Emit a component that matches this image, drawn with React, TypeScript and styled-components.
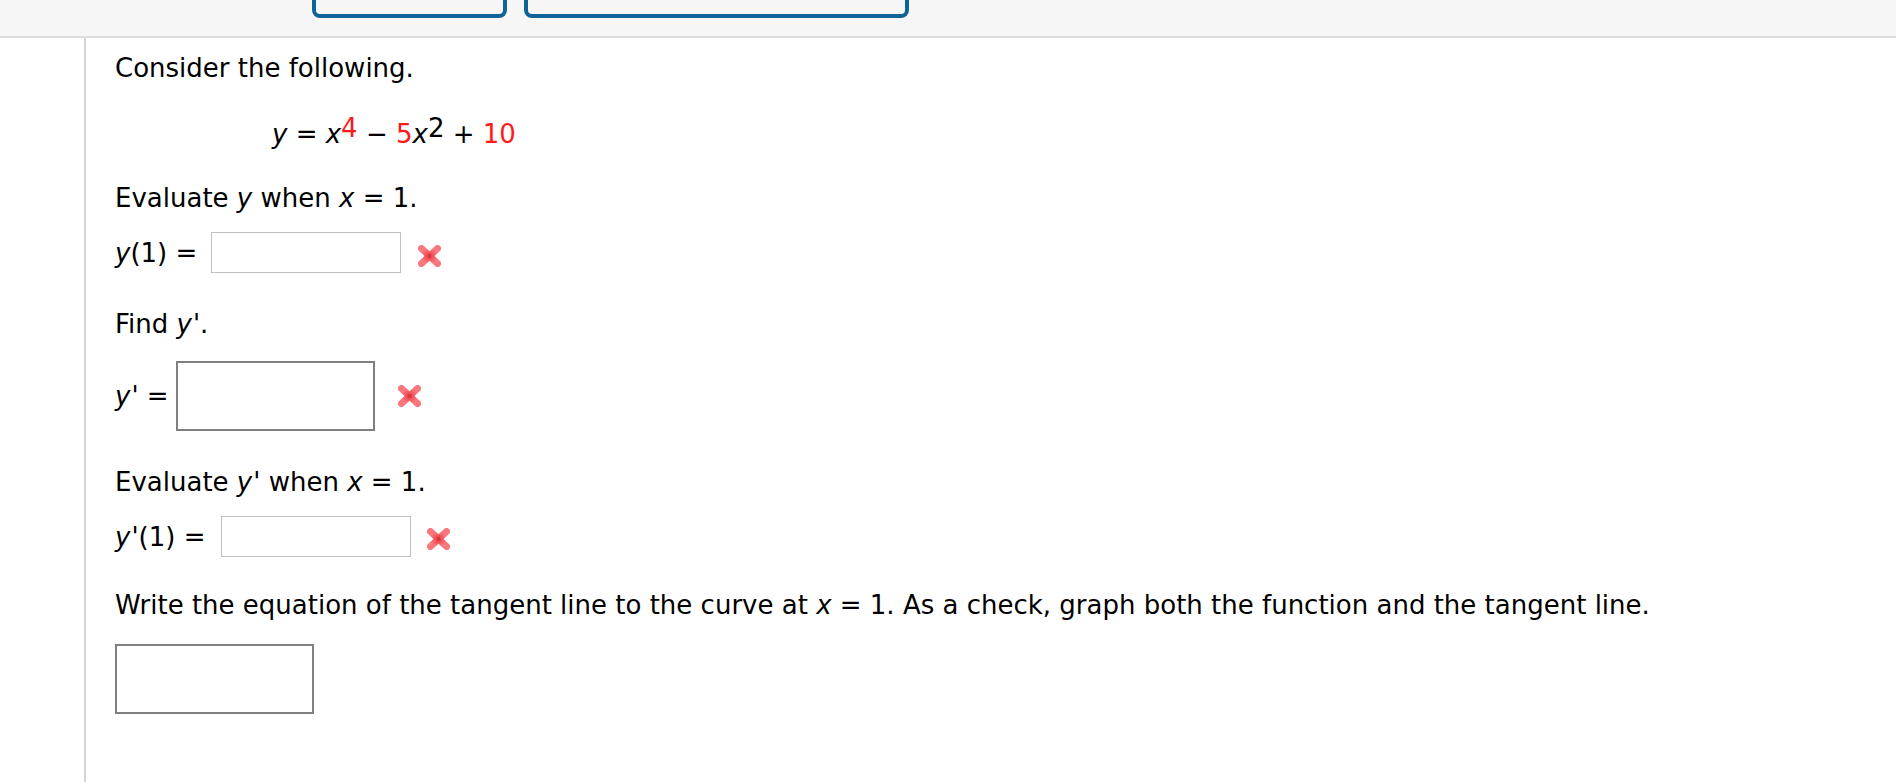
import styled, { createGlobalStyle } from "styled-components";

const GlobalStyle = createGlobalStyle`
  html, body {
    margin: 0;
    padding: 0;
    background: #ffffff;
  }
  body {
    font-family: "DejaVu Sans", Verdana, sans-serif;
    color: #000000;
  }
`;

const Header = styled.div`
  height: 36px;
  background: #f6f6f6;
  border-bottom: 2px solid #dcdcdc;
  display: flex;
  align-items: flex-start;
  gap: 17px;
  padding-left: 312px;
`;

const TabButton = styled.div<{ $width: number }>`
  width: ${(p) => p.$width}px;
  height: 14px;
  box-sizing: content-box;
  border: 4px solid #0e6497;
  border-top: none;
  border-radius: 0 0 8px 8px;
  background: #f6f6f6;
`;

const Page = styled.div`
  margin-left: 84px;
  border-left: 2px solid #d3d3d3;
  min-height: calc(100vh - 38px);
  padding: 15px 0 0 29px;
  box-sizing: border-box;
`;

const Text = styled.div<{ $top: number }>`
  font-size: 26px;
  line-height: 30px;
  margin-top: ${(p) => p.$top}px;
  white-space: nowrap;
`;

const Equation = styled(Text)`
  padding-left: 157px;
`;

const Var = styled.i`
  font-style: italic;
`;

const Prime = styled.i`
  font-style: italic;
  margin-left: 1px;
`;

const Red = styled.span`
  color: #ff1a1a;
`;

const Sup = styled.span<{ $red?: boolean }>`
  vertical-align: 6px;
  line-height: 0;
  color: ${(p) => (p.$red ? "#ff1a1a" : "inherit")};
`;

const AnswerRow = styled.div<{ $top: number }>`
  display: flex;
  align-items: center;
  margin-top: ${(p) => p.$top}px;
  font-size: 26px;
  line-height: 30px;
`;

const Label = styled.span<{ $gap: number }>`
  margin-right: ${(p) => p.$gap}px;
  white-space: nowrap;
`;

const AnswerBox = styled.div<{ $big?: boolean }>`
  box-sizing: border-box;
  background: #ffffff;
  width: ${(p) => (p.$big ? 199 : 190)}px;
  height: ${(p) => (p.$big ? 70 : 41)}px;
  border: ${(p) => (p.$big ? "2px solid #808080" : "1px solid #c0c0c0")};
`;

const Mark = styled.span<{ $gap: number; $drop: number }>`
  display: inline-flex;
  margin-left: ${(p) => p.$gap}px;
  margin-top: ${(p) => p.$drop}px;
`;

function WrongMark({ gap, drop = 0 }: { gap: number; drop?: number }) {
  return (
    <Mark $gap={gap} $drop={drop}>
      <svg width="27" height="26" viewBox="0 0 27 26">
        <defs>
          <radialGradient id="xg" cx="50%" cy="50%" r="50%">
            <stop offset="0%" stopColor="#e6363f" />
            <stop offset="50%" stopColor="#f25860" />
            <stop offset="100%" stopColor="#f9787e" />
          </radialGradient>
          <filter id="soft" x="-20%" y="-20%" width="140%" height="140%">
            <feGaussianBlur stdDeviation="0.7" />
          </filter>
        </defs>
        <g filter="url(#soft)" stroke="url(#xg)" strokeWidth="7" strokeLinecap="round">
          <line x1="5.5" y1="5.5" x2="21.5" y2="20.5" />
          <line x1="21.5" y1="5.5" x2="5.5" y2="20.5" />
        </g>
        <circle cx="13.5" cy="13" r="2" fill="#de3039" opacity="0.6" />
      </svg>
    </Mark>
  );
}

export default function App() {
  return (
    <>
      <GlobalStyle />
      <Header>
        <TabButton $width={187} />
        <TabButton $width={377} />
      </Header>
      <Page>
        <Text $top={0}>Consider the following.</Text>
        <Equation $top={36}>
          <Var>y</Var> = <Var>x</Var>
          <Sup $red>4</Sup> − <Red>5</Red>
          <Var>x</Var>
          <Sup>2</Sup> + <Red>10</Red>
        </Equation>
        <Text $top={34}>
          Evaluate <Var>y</Var> when <Var>x</Var> = 1.
        </Text>
        <AnswerRow $top={19}>
          <Label $gap={14}>
            <Var>y</Var>(1) =
          </Label>
          <AnswerBox />
          <WrongMark gap={15} drop={6} />
        </AnswerRow>
        <Text $top={36}>
          Find <Var>y</Var>
          <Prime>'</Prime>.
        </Text>
        <AnswerRow $top={22}>
          <Label $gap={7}>
            <Var>y</Var>
            <Prime>'</Prime> =
          </Label>
          <AnswerBox $big />
          <WrongMark gap={21} />
        </AnswerRow>
        <Text $top={36}>
          Evaluate <Var>y</Var>
          <Prime>'</Prime> when <Var>x</Var> = 1.
        </Text>
        <AnswerRow $top={19}>
          <Label $gap={16}>
            <Var>y</Var>
            <Prime>'</Prime>(1) =
          </Label>
          <AnswerBox />
          <WrongMark gap={14} drop={4} />
        </AnswerRow>
        <Text $top={33}>
          Write the equation of the tangent line to the curve at <Var>x</Var> = 1. As a check, graph both the
          function and the tangent line.
        </Text>
        <AnswerRow $top={24}>
          <AnswerBox $big />
        </AnswerRow>
      </Page>
    </>
  );
}
